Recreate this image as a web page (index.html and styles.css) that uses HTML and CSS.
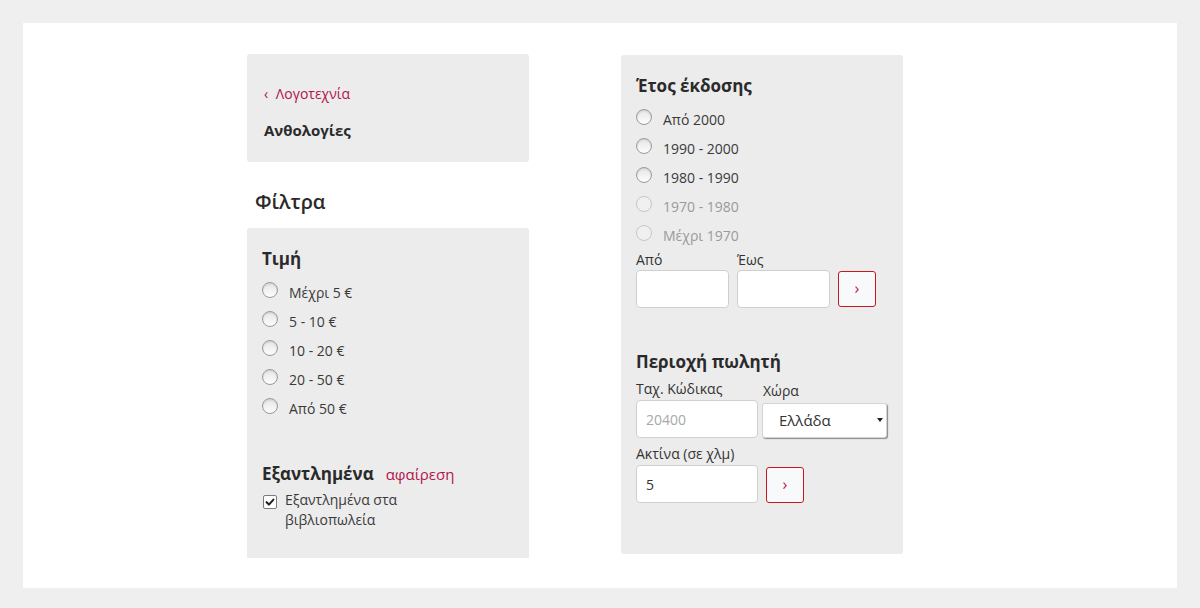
FILE: index.html
```html
<!DOCTYPE html>
<html lang="el">
<head>
<meta charset="utf-8">
<title>Φίλτρα</title>
<link rel="stylesheet" href="styles.css">
</head>
<body>
<div class="page">
  <div class="col col-left">
    <div class="box crumbs">
      <a class="back" href="#"><span class="chev">‹</span> Λογοτεχνία</a>
      <div class="current">Ανθολογίες</div>
    </div>
    <h2 class="filters-title">Φίλτρα</h2>
    <div class="box filters">
      <h3 class="ftitle">Τιμή</h3>
      <ul class="radios">
        <li><span class="radio"></span><span class="rlabel">Μέχρι 5 €</span></li>
        <li><span class="radio"></span><span class="rlabel">5 - 10 €</span></li>
        <li><span class="radio"></span><span class="rlabel">10 - 20 €</span></li>
        <li><span class="radio"></span><span class="rlabel">20 - 50 €</span></li>
        <li><span class="radio"></span><span class="rlabel">Από 50 €</span></li>
      </ul>
      <div class="ftitle-row">
        <h3 class="ftitle">Εξαντλημένα</h3>
        <a class="remove" href="#">αφαίρεση</a>
      </div>
      <div class="check-row">
        <span class="checkbox"><svg viewBox="0 0 14 14" width="14" height="14"><path d="M3 7.2 L5.8 10 L11 4.2" fill="none" stroke="#222" stroke-width="2.4" stroke-linecap="round" stroke-linejoin="round"/></svg></span>
        <span class="clabel">Εξαντλημένα στα βιβλιοπωλεία</span>
      </div>
    </div>
  </div>

  <div class="col col-right">
    <div class="box year">
      <h3 class="ftitle">Έτος έκδοσης</h3>
      <ul class="radios">
        <li><span class="radio"></span><span class="rlabel">Από 2000</span></li>
        <li><span class="radio"></span><span class="rlabel">1990 - 2000</span></li>
        <li><span class="radio"></span><span class="rlabel">1980 - 1990</span></li>
        <li class="disabled"><span class="radio"></span><span class="rlabel">1970 - 1980</span></li>
        <li class="disabled"><span class="radio"></span><span class="rlabel">Μέχρι 1970</span></li>
      </ul>
      <div class="range">
        <div class="field">
          <label class="flabel">Από</label>
          <input class="inp inp-small" type="text">
        </div>
        <div class="field">
          <label class="flabel">Έως</label>
          <input class="inp inp-small" type="text">
        </div>
        <button class="go go-range">›</button>
      </div>

      <h3 class="ftitle region-title">Περιοχή πωλητή</h3>
      <div class="region">
        <div class="field">
          <label class="flabel">Ταχ. Κώδικας</label>
          <input class="inp inp-mid" type="text" placeholder="20400">
        </div>
        <div class="field field-country">
          <label class="flabel">Χώρα</label>
          <div class="select">
            <span class="sel-val">Ελλάδα</span>
            <span class="sel-arrow"></span>
          </div>
        </div>
      </div>
      <div class="radius">
        <div class="field">
          <label class="flabel">Ακτίνα (σε χλμ)</label>
          <input class="inp inp-mid" type="text" value="5">
        </div>
        <button class="go go-radius">›</button>
      </div>
    </div>
  </div>
</div>
</body>
</html>
```

FILE: styles.css
```css
* { box-sizing: border-box; }
html, body { margin: 0; padding: 0; }
body {
  background: #efefef;
  font-family: "Open Sans", "Noto Sans", "DejaVu Sans", sans-serif;
  color: #333;
  font-size: 14px;
}
.page {
  margin: 23px;
  height: 565px;
  background: #fff;
  display: flex;
  align-items: flex-start;
  padding-left: 224px;
}
.col { width: 282px; }
.col-left { padding-top: 31px; }
.col-right { margin-left: 92px; padding-top: 32px; }

.box {
  background: #ececec;
  border-radius: 3px;
}
.crumbs {
  height: 108px;
  padding: 30px 17px 0;
}
.back {
  display: block;
  color: #b0154a;
  text-decoration: none;
  font-size: 14px;
  line-height: 20px;
}
.chev { margin-right: 4px; }
.current {
  margin-top: 16px;
  font-weight: 700;
  font-size: 15px;
  line-height: 20px;
  color: #2a2a2a;
}
.filters-title {
  margin: 27px 0 0 8px;
  font-size: 20px;
  line-height: 26px;
  font-weight: 600;
  color: #2a2a2a;
}
.filters {
  margin-top: 13px;
  height: 330px;
  padding: 20px 15px 0;
  border-radius: 3px 3px 0 0;
}
.ftitle {
  margin: 0;
  font-size: 17px;
  line-height: 22px;
  font-weight: 700;
  color: #2a2a2a;
}
.radios {
  list-style: none;
  margin: 8px 0 0;
  padding: 0;
}
.radios li {
  display: flex;
  align-items: center;
  height: 29px;
}
.radio {
  width: 16px;
  height: 16px;
  border-radius: 50%;
  border: 1px solid #9a9a9a;
  background: linear-gradient(#e6e6e6, #fdfdfd);
  box-shadow: inset 0 1px 2px rgba(0,0,0,0.12);
  margin-top: -6px;
  flex: none;
}
.rlabel {
  margin-left: 11px;
  font-size: 14px;
  color: #3a3a3a;
  line-height: 20px;
}
.disabled .radio { border-color: #c6c6c6; background: #f0f0f0; box-shadow: none; }
.disabled .rlabel { color: #9a9a9a; }

.ftitle-row {
  display: flex;
  align-items: baseline;
  margin-top: 40px;
}
.remove {
  margin-left: 12px;
  color: #b0154a;
  text-decoration: none;
  font-size: 15px;
}
.check-row {
  display: flex;
  align-items: flex-start;
  margin-top: 5px;
  padding-left: 1px;
}
.checkbox {
  width: 14px;
  height: 14px;
  margin-top: 5px;
  border: 1px solid #7a7a7a;
  border-radius: 2px;
  background: #fff;
  display: flex;
  align-items: center;
  justify-content: center;
  flex: none;
}
.checkbox svg { display: block; }
.clabel {
  margin-left: 8px;
  width: 150px;
  line-height: 20px;
  font-size: 14px;
  color: #3a3a3a;
}

.year {
  height: 499px;
  padding: 20px 15px 0;
}
.year .radios { margin-top: 8px; }
.range, .region, .radius {
  display: flex;
  align-items: flex-end;
}
.range { margin-top: 1px; gap: 8px; }
.range .flabel { margin-bottom: 1px; }
.field { display: flex; flex-direction: column; }
.flabel {
  font-size: 14px;
  line-height: 18px;
  color: #333;
  margin-bottom: 2px;
}
.inp {
  height: 38px;
  border: 1px solid #cfcfcf;
  border-radius: 4px;
  background: #fff;
  font-family: inherit;
  font-size: 14px;
  color: #333;
  padding: 0 9px;
  outline: none;
}
.inp::placeholder { color: #a8a8a8; }
.inp-small { width: 93px; }
.inp-mid { width: 122px; }
.go {
  width: 38px;
  height: 36px;
  border: 1px solid #c8171e;
  border-radius: 3px;
  background: #f8f9fb;
  color: #c0124a;
  font-family: inherit;
  font-size: 16px;
  line-height: 1;
  padding: 0 0 3px;
  cursor: pointer;
}
.go-range { margin-bottom: 1px; }
.region-title { margin-top: 43px; }
.region { margin-top: 7px; gap: 4px; }
.field-country .flabel { margin-left: 1px; margin-bottom: 3px; }
.select {
  width: 125px;
  height: 35px;
  background: #fff;
  border: 1px solid #d4d4d4;
  border-radius: 3px;
  box-shadow: 1px 1px 1px #8a8a8a;
  display: flex;
  align-items: center;
  justify-content: space-between;
  padding: 0 3px 2px 16px;
}
.sel-val { font-size: 15px; color: #333; }
.sel-arrow {
  width: 0; height: 0;
  border-left: 3px solid transparent;
  border-right: 3px solid transparent;
  border-top: 4px solid #222;
}
.radius { margin-top: 7px; gap: 8px; }
.go-radius { margin-bottom: 0; }
```
